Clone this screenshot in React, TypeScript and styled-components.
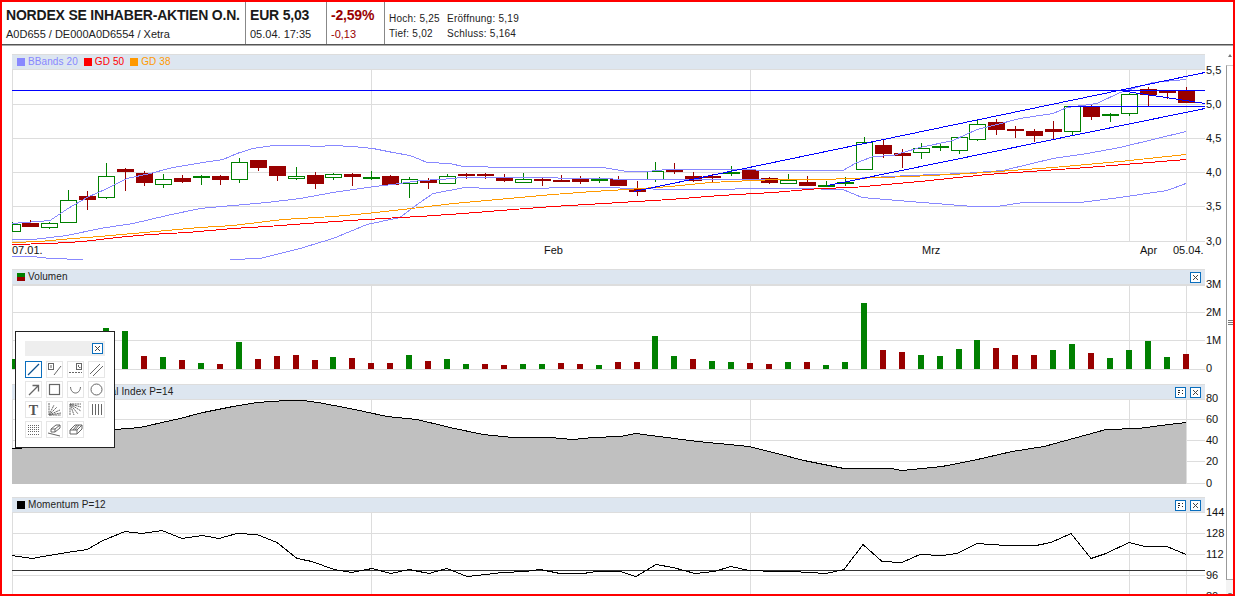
import { ReactNode } from "react";
import styled, { createGlobalStyle } from "styled-components";

const GlobalStyle = createGlobalStyle`
  html, body {
    margin: 0;
    padding: 0;
    background: #ffffff;
    font-family: "Liberation Sans", Arial, sans-serif;
    color: #111111;
  }
`;

const GREEN = "#008000";
const RED = "#990000";
const GRID = "#dddddd";
const BAND = "#8888ff";
const BLUE = "#0000ff";

type CandleKind = "h" | "g" | "r";
type Candle = [CandleKind, number, number, number, number];

// body top, body bottom, wick top, wick bottom (page pixels, read off the chart)
const candles: Candle[] = [
  ["h", 224, 230.7, 222, 232], ["r", 223, 226.7, 220, 226.7], ["h", 223.3, 227.3, 222, 228.7],
  ["h", 200.3, 222.3, 190, 222.3], ["r", 196, 199.7, 191, 209.7], ["h", 176.3, 197.7, 163, 199],
  ["r", 169, 171.7, 167.7, 190.7], ["r", 173.3, 183.7, 171, 185.7], ["h", 179.3, 184.3, 174, 187.7],
  ["r", 178, 181.7, 175, 183.3], ["g", 176, 177.7, 175, 184.7], ["r", 176, 179.7, 175, 184.7],
  ["h", 162.3, 179.3, 158, 182.7], ["r", 160, 167.7, 160, 170.7], ["r", 166, 175.7, 166, 181],
  ["h", 176.3, 178.3, 167, 180], ["r", 175.3, 184.7, 172, 188.7], ["h", 174.3, 177.3, 173, 180],
  ["r", 174, 176.7, 173, 185.7], ["g", 177, 178.7, 171, 180.3], ["r", 176, 184.7, 175, 184.7],
  ["h", 179.3, 183.3, 177, 197.7], ["r", 180, 182.7, 178, 188.7], ["h", 176.3, 183.3, 174, 183.3],
  ["r", 174, 175.7, 173, 178.7], ["r", 174, 175.7, 173, 178.7], ["r", 178, 180.7, 174, 182.3],
  ["h", 179.3, 182.3, 173, 182.3], ["r", 179, 180.7, 178, 185.7], ["r", 180, 181.7, 175, 182.3],
  ["r", 179, 181.7, 176, 183.7], ["g", 179.3, 180.7, 177.3, 182.7], ["r", 178.7, 185.7, 176, 185.7],
  ["r", 188.3, 192.7, 181, 195.7], ["h", 171, 179, 162, 181.7], ["r", 170, 171.7, 163, 174],
  ["r", 176, 180.7, 172, 181.7], ["r", 176, 177.7, 174, 182], ["g", 172, 173.7, 166, 176],
  ["r", 170, 179.3, 169.3, 180], ["r", 178, 182.7, 177, 183.7], ["h", 180, 182.7, 174, 183.7],
  ["r", 182, 185.7, 176, 185.7], ["g", 185, 186.7, 181, 186.7], ["g", 182, 183.7, 177, 186],
  ["h", 142.3, 169.3, 137.3, 169.3], ["r", 145, 153.7, 139.3, 157.7], ["r", 153, 156, 149, 168],
  ["h", 148.3, 152.3, 143.3, 158.7], ["g", 146, 147.7, 144, 150.7], ["h", 137.3, 150.3, 137.3, 153.7],
  ["h", 124.3, 139.3, 120.3, 141], ["r", 122, 130, 119.3, 135], ["r", 129, 131, 126, 138],
  ["r", 131, 136, 129, 142], ["r", 129, 132, 121, 139.3], ["h", 106.3, 131.3, 106.3, 135.7],
  ["r", 106.7, 117, 105, 120], ["g", 114, 116, 113, 121.7], ["h", 94.3, 113.7, 93.3, 115.7],
  ["r", 89, 95, 87.3, 106], ["r", 90, 93, 90, 99], ["r", 91, 102.7, 87, 102.7],
];

const volumeTops = [
  359, 362, 360, 350, 345, 328, 331, 356, 357, 360, 363, 364, 342, 359, 356, 355, 360, 357, 358, 363, 363,
  355, 361, 359, 364, 364, 365, 364, 364, 363, 364, 365, 362, 362, 336, 356, 359, 361, 362, 363, 364, 362,
  362, 365, 362, 303, 350, 352, 355, 356, 349, 340, 348, 355, 355, 350, 344, 353, 358, 350, 341, 357, 354,
];
const volumeColors = "gggrg" + "ggrgrgrgrrrrgrrrgrggrrggrrgr" + "rggrggrrgrgggrrggggrrrggrggggr";

const upperBand =
  "12,223 50,220 68,208 87,197 107,188 127,178 150,173 173,167 203,162 223,159 237,153 253,148 273,145 303,145 317,146 333,145 353,146 373,148 393,152 410,155 420,159 427,162 450,163 463,166 513,167 537,167 603,167 627,171 647,171 667,169 843,170 855,163 873,156 893,155 920,147 953,140 977,129 993,125 1020,118 1053,113 1067,107 1097,103 1120,92 1153,82 1186,79";
const middleBand =
  "12,239 33,239 67,235 100,228 133,223 167,215 200,208 233,205 267,202 300,198 333,192 367,187 400,183 420,180 440,179 463,177 530,177 640,179 820,179 853,178 910,175 963,173 1003,170 1053,158 1087,153 1120,147 1186,131";
const lowerBandLeft = "12,256 33,256 50,258 83,259";
const lowerBandRight =
  "230,259 260,258 300,248 333,238 367,224 400,217 420,202 433,193 465,187 493,188 607,187 633,188 673,189 797,188 843,189 862,197 910,201 973,206 997,206 1023,202 1080,202 1120,197 1167,190 1186,183";
const gd50 =
  "12,244 50,243 83,241 117,237 150,234 187,232 233,228 267,226 307,223 350,220 400,217 420,216 463,213 513,209 553,206 587,204 620,202 670,199 720,195 773,192 820,188 853,187 920,181 987,174 1087,167 1186,159";
const gd38 =
  "12,242 40,241 73,238 100,236 133,233 167,230 200,227 233,225 283,219 333,216 367,213 420,207 453,203 487,200 520,197 553,194 593,191 627,189 670,186 710,182 753,180 777,179 820,179 853,178 910,176 970,173 1053,167 1120,161 1186,154";

const rsi =
  "12,448 33,447 115,429 140,427 180,418 203,412 233,406 257,402 287,400 303,400 318,402 350,408 387,416 417,419 450,427 483,434 513,437 550,437 573,439 593,437 620,436 636,433 651,435 698,441 749,446 777,453 804,460 844,468 891,468 902,470 942,466 973,460 1012,451 1044,446 1106,429 1138,428 1169,424 1186,422";
const momentum =
  "12,555 32,558 49,555 67,552 87,549 103,540 125,531 142,533 162,530 182,538 202,535 219,538 237,533 257,534 277,542 297,558 312,561 334,569 352,572 372,568 391,573 409,569 429,573 447,568 467,576 486,574 502,572 526,571 540,569 560,573 583,573 597,571 620,571 636,576 656,564 673,567 695,573 714,571 731,566 749,570 777,571 793,571 826,573 844,569 863,544 882,561 902,562 920,554 942,555 957,553 977,543 1006,545 1036,545 1051,542 1071,533 1091,558 1106,553 1129,542 1145,546 1167,546 1186,554";

const Frame = styled.div`
  position: relative;
  box-sizing: border-box;
  width: 1235px;
  height: 596px;
  border: 2px solid #ff0000;
  overflow: hidden;
  display: flex;
  flex-direction: column;
  background: #ffffff;
`;

const TopBar = styled.header`
  box-sizing: border-box;
  height: 43px;
  flex: none;
  display: flex;
  border-bottom: 1px solid #555555;
  box-shadow: 0 1px 0 #aaaaaa;
`;

const QuoteCell = styled.div<{ $width: number }>`
  box-sizing: border-box;
  width: ${({ $width }) => $width}px;
  padding: 5px 0 0 4px;
  border-right: 1px solid #888888;
  display: flex;
  flex-direction: column;
  gap: 3px;
`;

const BigText = styled.div<{ $red?: boolean }>`
  font-size: 14px;
  line-height: 17px;
  font-weight: bold;
  letter-spacing: -0.2px;
  white-space: nowrap;
  color: ${({ $red }) => ($red ? RED : "#1a1a1a")};
`;

const SmallText = styled.div<{ $red?: boolean }>`
  font-size: 11px;
  line-height: 14px;
  white-space: nowrap;
  color: ${({ $red }) => ($red ? RED : "#222222")};
`;

const StatsGrid = styled.div`
  display: grid;
  grid-template-columns: 58px auto;
  grid-auto-rows: 15px;
  padding: 9px 0 0 4px;
  font-size: 10px;
  line-height: 15px;
  letter-spacing: 0.25px;
  white-space: nowrap;
  color: #222222;
`;

const Workspace = styled.div`
  flex: 1;
  min-height: 0;
  display: flex;
`;

const Charts = styled.main`
  width: 1224px;
  flex: none;
  padding: 9px 0 0 10px;
  box-sizing: border-box;
`;

const Panel = styled.section`
  width: 1193px;
`;

const PanelHeader = styled.div`
  box-sizing: border-box;
  height: 16px;
  display: flex;
  align-items: center;
  gap: 4px;
  padding: 0 4px 0 5px;
  background: #dde6f0;
  border-top: 1px solid #dddddd;
  border-bottom: 1px solid #dddddd;
`;

const Legend = styled.div`
  display: flex;
  align-items: center;
  flex: 1;
  gap: 6px;
`;

const LegendItem = styled.span<{ $color: string; $offset?: number }>`
  display: inline-flex;
  align-items: center;
  gap: 3px;
  font-size: 10px;
  line-height: 14px;
  letter-spacing: 0.1px;
  color: ${({ $color }) => $color};
  margin-left: ${({ $offset }) => $offset ?? 0}px;
`;

const Swatch = styled.i<{ $color: string; $second?: string }>`
  display: block;
  width: 8px;
  height: 8px;
  background: ${({ $color, $second }) =>
    $second ? `linear-gradient(${$color} 50%, ${$second} 50%)` : $color};
`;

const IconButton = styled.button`
  box-sizing: border-box;
  width: 11px;
  height: 11px;
  padding: 0;
  display: block;
  background: #ffffff;
  border: 1px solid #0a6ebd;
  flex: none;

  svg {
    display: block;
  }
`;

const Plot = styled.svg`
  display: block;
  overflow: visible;
  font-family: "Liberation Sans", Arial, sans-serif;
  font-size: 11px;
  fill: #111111;
`;

const ScrollTrack = styled.aside`
  flex: 1;
  display: flex;
  flex-direction: column;
  align-items: stretch;
`;

const ScrollArrow = styled.div<{ $down?: boolean }>`
  height: 20px;
  flex: none;
  display: flex;
  justify-content: flex-end;
  align-items: ${({ $down }) => ($down ? "flex-end" : "center")};
  padding-bottom: ${({ $down }) => ($down ? 2 : 0)}px;
  padding-right: 1px;

  &::after {
    content: "";
    border-left: 2.5px solid transparent;
    border-right: 2.5px solid transparent;
    ${({ $down }) => ($down ? "border-top" : "border-bottom")}: 3px solid #777777;
  }
`;

const ScrollThumb = styled.div`
  flex: 1;
  box-sizing: border-box;
  border-left: 1px solid #999999;
  border-top: 1px solid #cccccc;
  border-bottom: 1px solid #aaaaaa;
  display: flex;
  align-items: center;
  justify-content: flex-end;
  background: #ffffff;
`;

const Grip = styled.div`
  width: 5px;
  height: 5px;
  background: repeating-linear-gradient(#777777 0 1px, #ffffff 1px 2px);
`;

const ScrollFoot = styled.div`
  height: 14px;
  flex: none;
  background: #f4f4f4;
  display: flex;
  justify-content: flex-end;
  align-items: center;
`;

const Toolbox = styled.div`
  position: absolute;
  left: 13px;
  top: 329px;
  box-sizing: border-box;
  width: 100px;
  height: 117px;
  padding: 9px;
  background: #ffffff;
  border: 1px solid #222222;
`;

const ToolTitle = styled.div`
  box-sizing: border-box;
  height: 15px;
  margin-bottom: 5px;
  padding: 2px;
  background: #eeeeee;
  display: flex;
  justify-content: flex-end;
`;

const ToolGrid = styled.div`
  display: grid;
  grid-template-columns: repeat(4, 17px);
  grid-auto-rows: 17px;
  column-gap: 4px;
  row-gap: 3px;
`;

const ToolButton = styled.div<{ $active?: boolean }>`
  box-sizing: border-box;
  border: 1px solid ${({ $active }) => ($active ? "#0a6ebd" : "#e6e6e6")};

  svg {
    display: block;
    fill: none;
    stroke: #666666;
    stroke-width: 1;
  }
`;

const CloseIcon = () => (
  <svg width="9" height="9" viewBox="0 0 9 9">
    <path d="M2 2 L7 7 M7 2 L2 7" stroke="#444444" strokeWidth="1" shapeRendering="crispEdges" />
  </svg>
);

const DotsIcon = () => (
  <svg width="9" height="9" viewBox="0 0 9 9">
    <path d="M2 2.5 H4 M6 2.5 H7 M2 4.5 H4 M2 6.5 H3 M6 5.5 H7" stroke="#222222" strokeWidth="1" shapeRendering="crispEdges" />
  </svg>
);

const toolIcons: ReactNode[] = [
  <path d="M2 13 L13 2" stroke="#0b4f8c" strokeWidth="1.3" />,
  <>
    <rect x="1.5" y="1.5" width="5" height="6" stroke="#666" />
    <path d="M4 3 V6 M7 13 L14 4" />
  </>,
  <>
    <rect x="8.5" y="1.5" width="5" height="6" />
    <path d="M10.5 3 V5.5 H12.5 M1 10.5 H14" strokeDasharray="2 1" />
  </>,
  <path d="M1 12 L11 2 M4 14 L14 4" />,
  <path d="M3 13 L12 4 M6.5 3.5 H12.5 V9.5" strokeWidth="1.3" />,
  <rect x="2.5" y="2.5" width="10" height="10" strokeWidth="1.2" />,
  <path d="M2.5 5 C3 13 12 13 12.5 5" />,
  <circle cx="7.5" cy="7.5" r="5.5" />,
  <text x="7.5" y="13" textAnchor="middle" fontFamily="Liberation Serif, serif" fontWeight="bold" fontSize="14" fill="#555" stroke="none">T</text>,
  <path d="M2 1 V13 H14 M2 13 L7 3 M2 13 L10 5 M2 13 L13 8 M2 13 L14 11" strokeDasharray="2 0.6" />,
  <path d="M2 13 V2 H13 M2 2 L6 13 M2 2 L10 12 M2 2 L13 9 M2 2 L13 5" strokeDasharray="2 0.6" />,
  <path d="M3.5 2 V13 M6.5 2 V13 M9.5 2 V13 M12.5 2 V13" />,
  <path d="M2 3.5 H14 M2 5.5 H14 M2 7.5 H14 M2 9.5 H14 M2 12.5 H14" strokeDasharray="1 1" />,
  <path d="M4 7 L9 3 H13 V6 L8 10 H4 Z M4 7 H8 L13 3 M8 7 V10 M1 11 L13 14" />,
  <path d="M2 8 L7 3 H14 V7 L9 12 H2 Z M2 8 H9 L14 3 M9 8 V12 M5 8 L9 3 M7 8 L11 3" />,
];

type HeaderProps = { children: ReactNode; dots?: boolean; close?: boolean };

const Header = ({ children, dots, close = true }: HeaderProps) => (
  <PanelHeader>
    <Legend>{children}</Legend>
    {dots && (
      <IconButton aria-label="Einstellungen">
        <DotsIcon />
      </IconButton>
    )}
    {close && (
      <IconButton aria-label="Schliessen">
        <CloseIcon />
      </IconButton>
    )}
  </PanelHeader>
);

const candleX = (i: number) => Math.round(11.5 + i * 18.94);

const Grid = ({ rows, top, bottom }: { rows: number[]; top: number; bottom: number }) => (
  <g stroke={GRID} shapeRendering="crispEdges">
    {rows.map((y) => (
      <line key={y} x1="12" x2="1205" y1={y + 0.5} y2={y + 0.5} />
    ))}
    {[12, 371, 750, 1129, 1186].map((x) => (
      <line key={x} x1={x + 0.5} x2={x + 0.5} y1={top} y2={bottom} />
    ))}
  </g>
);

const Labels = ({ items }: { items: [string, number][] }) => (
  <g>
    {items.map(([text, y]) => (
      <text key={text} x="1206" y={y + 4}>
        {text}
      </text>
    ))}
  </g>
);

const Line = ({ points, color }: { points: string; color: string }) => (
  <polyline
    points={points}
    transform="translate(0 0.5)"
    fill="none"
    stroke={color}
    strokeWidth={1}
    shapeRendering="crispEdges"
  />
);

const CandleMark = ({ candle, index }: { candle: Candle; index: number }) => {
  const [kind, top, bottom, wickTop, wickBottom] = candle;
  const x = candleX(index);
  const color = kind === "r" ? RED : GREEN;
  const left = Math.max(12, x - 8);
  return (
    <g shapeRendering="crispEdges">
      <line x1={x + 0.5} x2={x + 0.5} y1={wickTop} y2={wickBottom} stroke={color} />
      {kind === "h" ? (
        <rect x={left + 0.5} y={Math.round(top) + 0.5} width={x + 8 - left} height={Math.round(bottom - top)} fill="#ffffff" stroke={color} />
      ) : (
        <rect x={left} y={Math.round(top)} width={x + 9 - left} height={Math.max(2, Math.round(bottom - top))} fill={color} />
      )}
    </g>
  );
};

const PricePlot = () => (
  <Plot width="1193" height="199" viewBox="12 70 1193 199">
    <Grid rows={[104, 138, 172, 206, 241]} top={70} bottom={241} />
    {candles.map((c, i) => (
      <CandleMark key={i} candle={c} index={i} />
    ))}
    <Line points={upperBand} color={BAND} />
    <Line points={middleBand} color={BAND} />
    <Line points={lowerBandLeft} color={BAND} />
    <Line points={lowerBandRight} color={BAND} />
    <Line points={gd38} color="#ff9900" />
    <Line points={gd50} color="#ff0000" />
    <Line points="12,90 1205,90" color={BLUE} />
    <Line points="634,191 1205,72" color={BLUE} />
    <Line points="828,185 1205,108" color={BLUE} />
    <Line points="1068,106 1205,106" color={BLUE} />
    <Line points="1120,90 1205,103" color={BLUE} />
    <Labels items={[["5,5", 70], ["5,0", 104], ["4,5", 138], ["4,0", 172], ["3,5", 206], ["3,0", 241]]} />
    <text x="12" y="254">07.01.</text>
    <text x="544" y="254">Feb</text>
    <text x="922" y="254">Mrz</text>
    <text x="1140" y="254">Apr</text>
    <text x="1173" y="254">05.04.</text>
  </Plot>
);

const VolumePlot = () => (
  <Plot width="1193" height="99" viewBox="12 285 1193 99">
    <Grid rows={[285, 312, 340, 369]} top={285} bottom={369} />
    {volumeTops.map((top, i) => (
      <rect
        key={i}
        x={Math.max(12, candleX(i) - 3)}
        y={top}
        width={i === 0 ? 4 : 6}
        height={369 - top}
        fill={volumeColors[i] === "g" ? GREEN : RED}
        shapeRendering="crispEdges"
      />
    ))}
    <Labels items={[["3M", 284], ["2M", 312], ["1M", 340], ["0", 368]]} />
  </Plot>
);

const RsiPlot = () => (
  <Plot width="1193" height="97" viewBox="12 400 1193 97">
    <Grid rows={[419, 440, 461, 483]} top={400} bottom={484} />
    <polygon points={`12,484 ${rsi} 1186,484`} fill="#c0c0c0" shapeRendering="crispEdges" />
    <Line points={rsi} color="#000000" />
    <Labels items={[["80", 398], ["60", 419], ["40", 440], ["20", 461], ["0", 483]]} />
  </Plot>
);

const MomentumPlot = () => (
  <Plot width="1193" height="81" viewBox="12 513 1193 81">
    <Grid rows={[533, 554, 575]} top={513} bottom={600} />
    <Line points="12,570 1205,570" color="#333333" />
    <Line points={momentum} color="#000000" />
    <Labels items={[["144", 512], ["128", 533], ["112", 554], ["96", 575], ["80", 596]]} />
  </Plot>
);

const App = () => (
  <>
    <GlobalStyle />
    <Frame>
      <TopBar>
        <QuoteCell $width={244}>
          <BigText>NORDEX SE INHABER-AKTIEN O.N.</BigText>
          <SmallText>A0D655 / DE000A0D6554 / Xetra</SmallText>
        </QuoteCell>
        <QuoteCell $width={81}>
          <BigText>EUR 5,03</BigText>
          <SmallText>05.04. 17:35</SmallText>
        </QuoteCell>
        <QuoteCell $width={58}>
          <BigText $red>-2,59%</BigText>
          <SmallText $red>-0,13</SmallText>
        </QuoteCell>
        <StatsGrid>
          <span>Hoch: 5,25</span>
          <span>Eröffnung: 5,19</span>
          <span>Tief: 5,02</span>
          <span>Schluss: 5,164</span>
        </StatsGrid>
      </TopBar>
      <Workspace>
        <Charts>
          <Panel>
            <Header close={false}>
              <LegendItem $color="#8888ff"><Swatch $color="#8888ff" />BBands 20</LegendItem>
              <LegendItem $color="#ff0000"><Swatch $color="#ff0000" />GD 50</LegendItem>
              <LegendItem $color="#ff9900"><Swatch $color="#ff9900" />GD 38</LegendItem>
            </Header>
            <PricePlot />
          </Panel>
          <Panel>
            <Header>
              <LegendItem $color="#222222"><Swatch $color={GREEN} $second={RED} />Volumen</LegendItem>
            </Header>
            <VolumePlot />
          </Panel>
          <Panel>
            <Header dots>
              <LegendItem $color="#222222" $offset={48}><Swatch $color="#000000" />Technical Index P=14</LegendItem>
            </Header>
            <RsiPlot />
          </Panel>
          <Panel>
            <Header dots>
              <LegendItem $color="#222222"><Swatch $color="#000000" />Momentum P=12</LegendItem>
            </Header>
            <MomentumPlot />
          </Panel>
        </Charts>
        <ScrollTrack>
          <ScrollArrow />
          <ScrollThumb>
            <Grip />
          </ScrollThumb>
          <ScrollFoot>
            <ScrollArrow $down />
          </ScrollFoot>
        </ScrollTrack>
      </Workspace>
      <Toolbox>
        <ToolTitle>
          <IconButton aria-label="Schliessen">
            <CloseIcon />
          </IconButton>
        </ToolTitle>
        <ToolGrid>
          {toolIcons.map((icon, i) => (
            <ToolButton key={i} $active={i === 0}>
              <svg width="15" height="15" viewBox="0 0 15 15">
                {icon}
              </svg>
            </ToolButton>
          ))}
        </ToolGrid>
      </Toolbox>
    </Frame>
  </>
);

export default App;
